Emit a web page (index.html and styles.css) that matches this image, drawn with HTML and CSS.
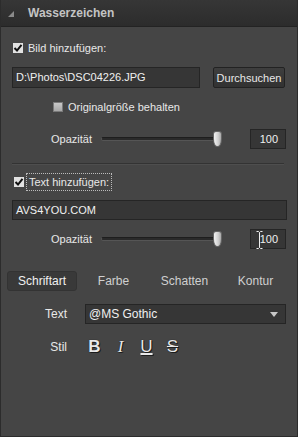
FILE: index.html
```html
<!DOCTYPE html>
<html lang="de">

<head>
    <meta charset="UTF-8">
    <title>Wasserzeichen</title>
    <link rel="stylesheet" href="styles.css">
</head>

<body>
    <div class="panel">
        <div class="head">
            <span class="tri"></span>
            <span class="title">Wasserzeichen</span>
        </div>

        <div class="content">
            <label class="check check-main">
                <span class="box on">
                    <svg width="10" height="10" viewBox="0 0 10 10"><path d="M1.5 5 L4 7.5 L8.5 1.8" fill="none" stroke="#111" stroke-width="2"/></svg>
                </span>
                <span>Bild hinzufügen:</span>
            </label>

            <div class="file-row">
                <div class="field file">D:\Photos\DSC04226.JPG</div>
                <button class="btn">Durchsuchen</button>
            </div>

            <label class="check check-sub">
                <span class="box"></span>
                <span>Originalgröße behalten</span>
            </label>

            <div class="opacity op-1">
                <span class="op-label">Opazität</span>
                <div class="slider">
                    <span class="track"></span>
                    <span class="thumb"></span>
                </div>
                <div class="field num">100</div>
            </div>

            <div class="sep"></div>

            <label class="check check-text">
                <span class="box on">
                    <svg width="10" height="10" viewBox="0 0 10 10"><path d="M1.5 5 L4 7.5 L8.5 1.8" fill="none" stroke="#111" stroke-width="2"/></svg>
                </span>
                <span class="focus">Text hinzufügen:</span>
            </label>

            <div class="field text-input">AVS4YOU.COM</div>

            <div class="opacity op-2">
                <span class="op-label">Opazität</span>
                <div class="slider">
                    <span class="track"></span>
                    <span class="thumb"></span>
                </div>
                <div class="field num">
                    100
                    <!-- Mauszeiger -->
                    <svg class="ibeam" width="7" height="18" viewBox="0 0 7 18"><path d="M0.5 0.5 H2.5 L3.5 1.5 L4.5 0.5 H6.5 M3.5 1.5 V16.5 M0.5 17.5 H2.5 L3.5 16.5 L4.5 17.5 H6.5" fill="none" stroke="#eee" stroke-width="1"/></svg>
                </div>
            </div>

            <div class="tabs">
                <span class="tab current">Schriftart</span>
                <span class="tab">Farbe</span>
                <span class="tab">Schatten</span>
                <span class="tab">Kontur</span>
            </div>

            <div class="form-row row-font">
                <span class="row-label">Text</span>
                <div class="field select">
                    <span>@MS Gothic</span>
                    <span class="arrow"></span>
                </div>
            </div>

            <div class="form-row row-style">
                <span class="row-label">Stil</span>
                <div class="styles">
                    <span class="st st-b">B</span>
                    <span class="st st-i">I</span>
                    <span class="st st-u">U</span>
                    <span class="st st-s">S</span>
                </div>
            </div>
        </div>
    </div>
</body>

</html>
```

FILE: styles.css
```css
* {
    margin: 0;
    padding: 0;
    box-sizing: border-box;
}

body {
    background: #454545;
    font-family: "Liberation Sans", Arial, sans-serif;
    font-size: 11px;
    color: #e8e8e8;
}

.panel {
    width: 298px;
    height: 437px;
    background: #454545;
    border: 1px solid #2c2c2c;
    border-top: none;
}

/* Kopfzeile */
.head {
    height: 27px;
    display: flex;
    align-items: center;
    background: linear-gradient(#363636, #2c2c2c);
    border-bottom: 1px solid #232323;
}

.tri {
    width: 0;
    height: 0;
    margin-left: 7px;
    margin-top: 1px;
    border-left: 6px solid transparent;
    border-bottom: 6px solid #8a8a8a;
}

.title {
    margin-left: 14px;
    font-weight: bold;
    font-size: 12px;
    color: #c4c4c4;
}

.content {
    padding: 0 0 0 11px;
}

/* Checkboxen */
.check {
    display: flex;
    align-items: center;
    height: 16px;
}

.box {
    width: 10px;
    height: 10px;
    background: linear-gradient(#c8c8c8, #a8a8a8);
    border: 1px solid #7a7a7a;
}

.box.on {
    background: #e2e2e2;
    border-color: #e2e2e2;
}

.box svg {
    display: block;
    margin: -1px 0 0 -1px;
}

.check-main {
    margin-top: 13px;
    padding-left: 1px;
    gap: 5px;
}

.check-sub {
    margin-top: 11px;
    padding-left: 41px;
    gap: 5px;
}

.check-text {
    margin-top: 10px;
    padding-left: 2px;
    gap: 3px;
}

.focus {
    outline: 1px dotted #bbb;
    padding: 1px 2px;
    height: 16px;
    line-height: 14px;
}

/* Eingabefelder */
.field {
    background: #363636;
    border: 1px solid #252525;
    color: #f0f0f0;
    height: 21px;
    line-height: 19px;
    padding-left: 3px;
}

.file-row {
    margin-top: 11px;
    display: flex;
    align-items: center;
    gap: 13px;
}

.file {
    width: 188px;
}

.btn {
    width: 72px;
    height: 21px;
    font: inherit;
    color: #e8e8e8;
    background: linear-gradient(#3e3e3e, #323232);
    border: 1px solid #222;
    border-radius: 2px;
}

/* Opazität */
.opacity {
    display: flex;
    align-items: center;
    height: 20px;
    padding-left: 39px;
}

.op-1 {
    margin-top: 14px;
}

.op-2 {
    margin-top: 9px;
}

.op-label {
    width: 50px;
}

.slider {
    position: relative;
    width: 121px;
    height: 20px;
    display: flex;
    align-items: center;
}

.track {
    width: 119px;
    height: 4px;
    background: #2a2a2a;
    border: 1px solid #555;
    border-top-color: #1e1e1e;
    border-radius: 2px;
}

.thumb {
    position: absolute;
    left: 112px;
    top: 2px;
    width: 9px;
    height: 16px;
    background: linear-gradient(90deg, #f2f2f2, #d0d0d0 60%, #a8a8a8);
    border-radius: 3px 3px 4px 4px / 3px 3px 8px 8px;
    border: 1px solid #666;
}

.num {
    position: relative;
    margin-left: 28px;
    width: 36px;
    height: 20px;
    text-align: right;
    padding-right: 7px;
    line-height: 18px;
}

.ibeam {
    position: absolute;
    left: 5px;
    top: 1px;
}

.sep {
    margin-top: 14px;
    width: 272px;
    height: 1px;
    background: #333;
    box-shadow: 0 1px 0 #4e4e4e;
}

.text-input {
    margin-top: 10px;
    width: 275px;
    height: 20px;
    line-height: 18px;
}

/* Reiter */
.tabs {
    margin-top: 22px;
    margin-left: -5px;
    display: grid;
    grid-template-columns: repeat(4, 71px);
    height: 20px;
}

.tab {
    text-align: center;
    line-height: 20px;
    font-size: 12px;
    color: #d0d0d0;
}

.tab.current {
    width: 70px;
    color: #f0f0f0;
    background: #393939;
    border: 1px solid #333;
    border-radius: 3px;
    line-height: 18px;
}

/* Schrift */
.form-row {
    display: flex;
    align-items: center;
}

.row-label {
    width: 55px;
    text-align: right;
    font-size: 12px;
}

.row-font {
    margin-top: 13px;
    gap: 18px;
}

.select {
    width: 201px;
    height: 20px;
    line-height: 18px;
    display: flex;
    justify-content: space-between;
    align-items: center;
    padding-right: 7px;
    font-size: 12px;
}

.arrow {
    width: 0;
    height: 0;
    border-left: 4px solid transparent;
    border-right: 4px solid transparent;
    border-top: 5px solid #c8c8c8;
}

.row-style {
    margin-top: 14px;
    height: 18px;
    gap: 20px;
}

.styles {
    display: flex;
    gap: 11px;
}

.st {
    font-size: 17px;
    line-height: 18px;
    color: #e8e8e8;
    text-shadow: 0 0 1px #000, 1px 1px 0 #1e1e1e;
    width: 15px;
    text-align: center;
}

.st-b {
    font-weight: bold;
}

.st-i {
    font-style: italic;
    font-family: "Liberation Serif", serif;
}

.st-u {
    text-decoration: underline;
    text-decoration-thickness: 2px;
}

.st-s {
    text-decoration: line-through;
}
```
